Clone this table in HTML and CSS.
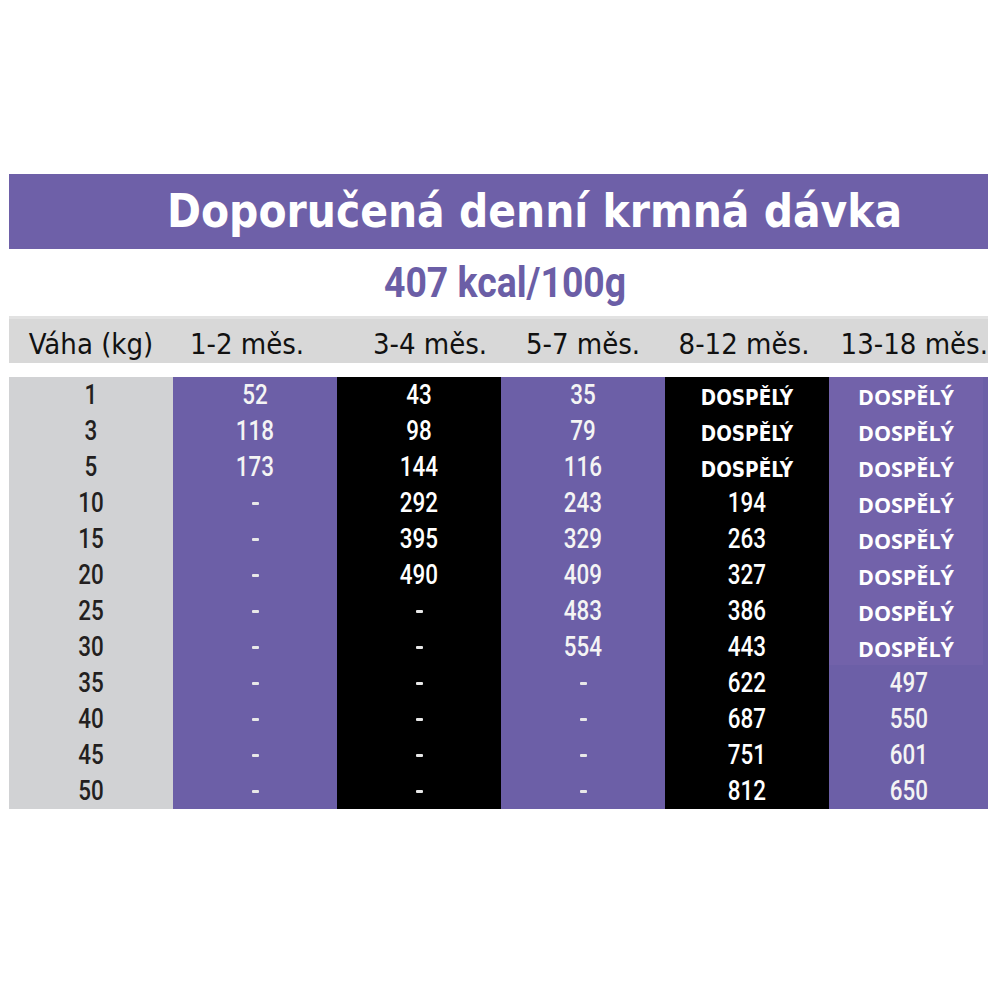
FILE: index.html
```html
<!DOCTYPE html>
<html lang="cs">
<head>
<meta charset="utf-8">
<title>Doporučená denní krmná dávka</title>
<link rel="stylesheet" href="styles.css">
</head>
<body>
<div class="sheet">
  <div class="title">Doporučená denní krmná dávka</div>
  <div class="kcal"><span class="cond">407 kcal/100g</span></div>
  <div class="head">
    <div class="hc">Váha (kg)</div>
    <div class="hc h1">1-2 měs.</div>
    <div class="hc h2">3-4 měs.</div>
    <div class="hc">5-7 měs.</div>
    <div class="hc h4">8-12 měs.</div>
    <div class="hc h5">13-18 měs.</div>
  </div>
  <div class="grid">
    <div class="col c-gray">
      <div class="cell"><span class="num">1</span></div>
      <div class="cell"><span class="num">3</span></div>
      <div class="cell"><span class="num">5</span></div>
      <div class="cell"><span class="num">10</span></div>
      <div class="cell"><span class="num">15</span></div>
      <div class="cell"><span class="num">20</span></div>
      <div class="cell"><span class="num">25</span></div>
      <div class="cell"><span class="num">30</span></div>
      <div class="cell"><span class="num">35</span></div>
      <div class="cell"><span class="num">40</span></div>
      <div class="cell"><span class="num">45</span></div>
      <div class="cell"><span class="num">50</span></div>
    </div>
    <div class="col c-purple">
      <div class="cell"><span class="num">52</span></div>
      <div class="cell"><span class="num">118</span></div>
      <div class="cell"><span class="num">173</span></div>
      <div class="cell"><span class="dash"></span></div>
      <div class="cell"><span class="dash"></span></div>
      <div class="cell"><span class="dash"></span></div>
      <div class="cell"><span class="dash"></span></div>
      <div class="cell"><span class="dash"></span></div>
      <div class="cell"><span class="dash"></span></div>
      <div class="cell"><span class="dash"></span></div>
      <div class="cell"><span class="dash"></span></div>
      <div class="cell"><span class="dash"></span></div>
    </div>
    <div class="col c-black">
      <div class="cell"><span class="num">43</span></div>
      <div class="cell"><span class="num">98</span></div>
      <div class="cell"><span class="num">144</span></div>
      <div class="cell"><span class="num">292</span></div>
      <div class="cell"><span class="num">395</span></div>
      <div class="cell"><span class="num">490</span></div>
      <div class="cell"><span class="dash"></span></div>
      <div class="cell"><span class="dash"></span></div>
      <div class="cell"><span class="dash"></span></div>
      <div class="cell"><span class="dash"></span></div>
      <div class="cell"><span class="dash"></span></div>
      <div class="cell"><span class="dash"></span></div>
    </div>
    <div class="col c-purple">
      <div class="cell"><span class="num">35</span></div>
      <div class="cell"><span class="num">79</span></div>
      <div class="cell"><span class="num">116</span></div>
      <div class="cell"><span class="num">243</span></div>
      <div class="cell"><span class="num">329</span></div>
      <div class="cell"><span class="num">409</span></div>
      <div class="cell"><span class="num">483</span></div>
      <div class="cell"><span class="num">554</span></div>
      <div class="cell"><span class="dash"></span></div>
      <div class="cell"><span class="dash"></span></div>
      <div class="cell"><span class="dash"></span></div>
      <div class="cell"><span class="dash"></span></div>
    </div>
    <div class="col c-black">
      <div class="cell"><span class="adult-k">DOSPĚLÝ</span></div>
      <div class="cell"><span class="adult-k">DOSPĚLÝ</span></div>
      <div class="cell"><span class="adult-k">DOSPĚLÝ</span></div>
      <div class="cell"><span class="num">194</span></div>
      <div class="cell"><span class="num">263</span></div>
      <div class="cell"><span class="num">327</span></div>
      <div class="cell"><span class="num">386</span></div>
      <div class="cell"><span class="num">443</span></div>
      <div class="cell"><span class="num">622</span></div>
      <div class="cell"><span class="num">687</span></div>
      <div class="cell"><span class="num">751</span></div>
      <div class="cell"><span class="num">812</span></div>
    </div>
    <div class="col c-purple last">
      <div class="cell alt"><span class="adult">DOSPĚLÝ</span></div>
      <div class="cell alt"><span class="adult">DOSPĚLÝ</span></div>
      <div class="cell alt"><span class="adult">DOSPĚLÝ</span></div>
      <div class="cell alt"><span class="adult">DOSPĚLÝ</span></div>
      <div class="cell alt"><span class="adult">DOSPĚLÝ</span></div>
      <div class="cell alt"><span class="adult">DOSPĚLÝ</span></div>
      <div class="cell alt"><span class="adult">DOSPĚLÝ</span></div>
      <div class="cell alt"><span class="adult">DOSPĚLÝ</span></div>
      <div class="cell"><span class="num">497</span></div>
      <div class="cell"><span class="num">550</span></div>
      <div class="cell"><span class="num">601</span></div>
      <div class="cell"><span class="num">650</span></div>
    </div>
  </div>
</div>
</body>
</html>
```

FILE: styles.css
```css
html, body {
  margin: 0;
  padding: 0;
  background: #ffffff;
}

.sheet {
  width: 979px;
  margin-left: 9px;
  padding-top: 174px;
  display: flex;
  flex-direction: column;
}

.title {
  height: 75px;
  background: #6e60a8;
  color: #ffffff;
  font-family: "DejaVu Sans Condensed", "DejaVu Sans", sans-serif;
  font-weight: bold;
  font-size: 45.5px;
  line-height: 75px;
  padding-left: 158px;
  white-space: nowrap;
  box-sizing: border-box;
}

.kcal {
  height: 67px;
  display: flex;
  align-items: center;
  justify-content: center;
  padding-left: 14px;
  color: #6b5ea6;
  font-family: Roboto, sans-serif;
  font-weight: 700;
  font-size: 42px;
}

.cond {
  display: inline-block;
  transform: scaleX(0.89);
  white-space: nowrap;
}

.head {
  height: 47px;
  background: #d8d8d8;
  border-top: 3px solid #e2e2e2;
  box-sizing: border-box;
  display: grid;
  grid-template-columns: 164px 164px 164px 164px 164px 159px;
  font-family: "DejaVu Sans Condensed", "DejaVu Sans", sans-serif;
  font-size: 29px;
  color: #111111;
}

.hc {
  display: flex;
  align-items: flex-end;
  justify-content: center;
  padding-bottom: 2px;
  white-space: nowrap;
}

.h1 { padding-right: 16px; }
.h2 { padding-left: 22px; }
.h4 { padding-right: 6px; }
.h5 { padding-left: 12px; justify-content: flex-end; }

.grid {
  margin-top: 14px;
  display: grid;
  grid-template-columns: 164px 164px 164px 164px 164px 159px;
}

.col {
  display: flex;
  flex-direction: column;
}

.c-gray { background: #d1d2d4; color: #231f20; }
.c-purple { background: #6c5fa7; color: #f4f4f4; }
.c-black { background: #000000; color: #ffffff; }

.cell {
  height: 36px;
  display: flex;
  align-items: center;
  justify-content: center;
}

.last .alt {
  background: #7262aa;
  margin-right: 5px;
}

.num {
  display: inline-block;
  font-family: Roboto, sans-serif;
  font-weight: 500;
  font-size: 28px;
  transform: scaleX(0.8);
  line-height: 1;
}

.adult {
  font-family: "Open Sans", sans-serif;
  font-weight: 700;
  font-size: 21.5px;
  color: #ffffff;
  padding-top: 3px;
}

.adult-k {
  font-family: "DejaVu Sans Condensed", "DejaVu Sans", sans-serif;
  font-weight: 700;
  font-size: 20.5px;
  color: #ffffff;
  padding-top: 5px;
}

.dash {
  display: inline-block;
  width: 7px;
  height: 3px;
  background: #e8e8e8;
  border-radius: 1px;
}
```
